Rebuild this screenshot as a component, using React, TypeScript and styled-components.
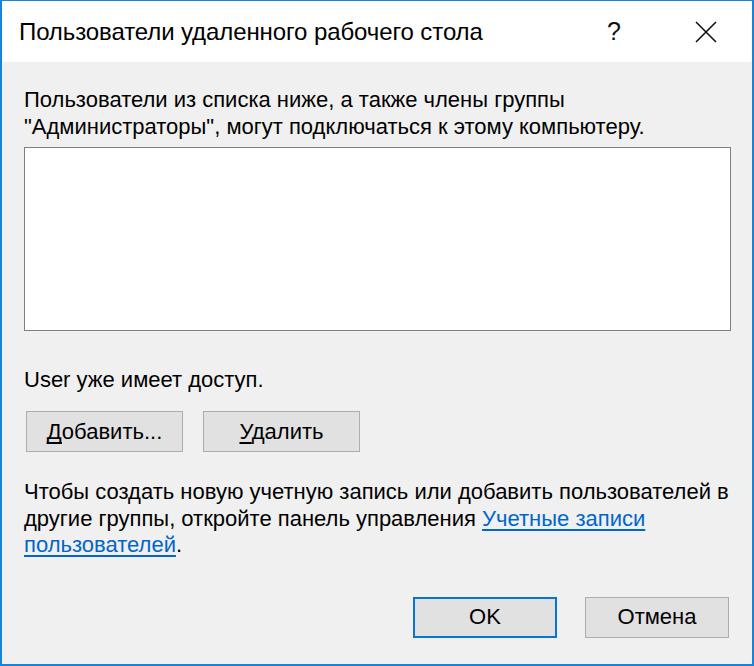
import React from "react";
import styled, { createGlobalStyle } from "styled-components";

const GlobalStyle = createGlobalStyle`
  html, body {
    margin: 0;
    padding: 0;
    background: #ffffff;
  }
  * { box-sizing: border-box; }
`;

const Window = styled.div`
  width: 754px;
  height: 666px;
  display: flex;
  flex-direction: column;
  border: 2px solid #1883d7;
  border-top-width: 1px;
  background: #f0f0f0;
  font-family: "Liberation Sans", Arial, sans-serif;
  color: #000;
  overflow: hidden;
`;

const TitleBar = styled.div`
  height: 61px;
  flex: none;
  display: flex;
  align-items: center;
  background: #ffffff;
  padding-left: 17px;
`;

const Title = styled.div`
  flex: 1;
  font-size: 24px;
  letter-spacing: -0.1px;
  color: #000;
`;

const CaptionButton = styled.div`
  width: 92px;
  height: 100%;
  display: flex;
  align-items: center;
  justify-content: center;
  font-size: 25px;
  color: #111;
`;

const Body = styled.div`
  flex: 1;
  display: flex;
  flex-direction: column;
  padding: 24px 21px 0 22px;
  font-size: 22px;
  line-height: 27px;
`;

const Intro = styled.p`
  margin: 0;
`;

const ListBox = styled.div`
  margin-top: 7px;
  height: 184px;
  background: #ffffff;
  border: 1px solid #7f7f7f;
`;

const Status = styled.p`
  margin: 35px 0 0;
`;

const ButtonRow = styled.div`
  display: flex;
  gap: 20px;
  margin-top: 18px;
  padding-left: 2px;
`;

const Button = styled.button<{ $default?: boolean; $w?: number }>`
  width: ${(p) => p.$w ?? 157}px;
  height: 41px;
  padding: 0;
  font-family: "Liberation Sans", Arial, sans-serif;
  font-size: 22px;
  color: #000;
  background: #e1e1e1;
  border: ${(p) => (p.$default ? "2px solid #0a74d6" : "1px solid #adadad")};
  border-radius: 0;
`;

const Key = styled.span`
  text-decoration: underline;
  text-decoration-skip-ink: none;
  text-underline-offset: 3px;
`;

const Note = styled.p`
  margin: 27px 0 0;
  line-height: 26.5px;
`;

const Link = styled.a`
  color: #0066cc;
  text-decoration: underline;
  text-underline-offset: 3px;
`;

const Footer = styled.div`
  display: flex;
  justify-content: flex-end;
  gap: 28px;
  margin-top: 38px;
  padding-right: 2px;
`;

export default function App() {
  return (
    <>
      <GlobalStyle />
      <Window>
        <TitleBar>
          <Title>Пользователи удаленного рабочего стола</Title>
          <CaptionButton>?</CaptionButton>
          <CaptionButton>
            <svg width="22" height="22" viewBox="0 0 22 22">
              <path d="M1 1 L21 21 M21 1 L1 21" stroke="#111" strokeWidth="1.6" fill="none" />
            </svg>
          </CaptionButton>
        </TitleBar>
        <Body>
          <Intro>
            Пользователи из списка ниже, а также члены группы
            <br />
            "Администраторы", могут подключаться к этому компьютеру.
          </Intro>
          <ListBox />
          <Status>User уже имеет доступ.</Status>
          <ButtonRow>
            <Button>
              <Key>Д</Key>обавить...
            </Button>
            <Button>
              <Key>У</Key>далить
            </Button>
          </ButtonRow>
          <Note>
            Чтобы создать новую учетную запись или добавить пользователей в
            <br />
            другие группы, откройте панель управления{" "}
            <Link href="#">Учетные записи</Link>
            <br />
            <Link href="#">пользователей</Link>.
          </Note>
          <Footer>
            <Button $default $w={144}>OK</Button>
            <Button $w={144}>Отмена</Button>
          </Footer>
        </Body>
      </Window>
    </>
  );
}
